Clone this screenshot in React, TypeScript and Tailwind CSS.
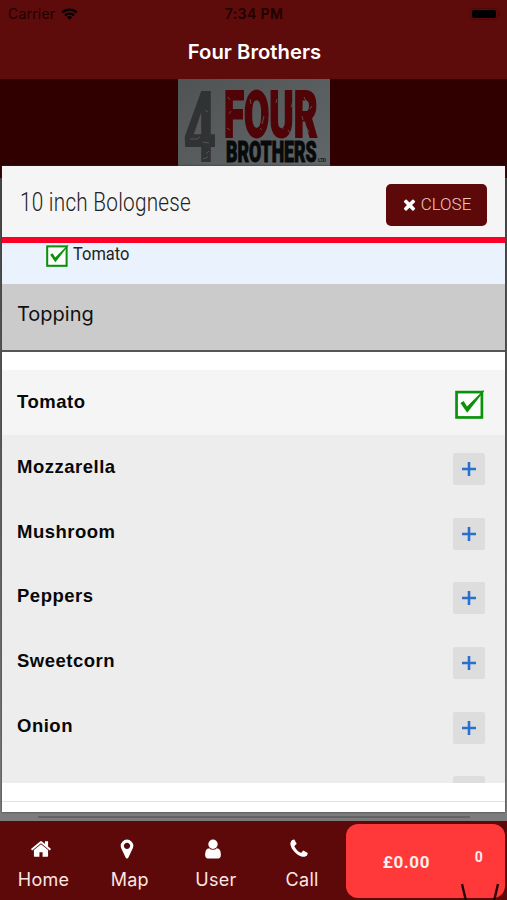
import React, { useState } from 'react';

interface Topping {
  id: string;
  name: string;
}

interface NavItem {
  label: string;
  path: string;
}

const toppings: Topping[] = [
  { id: 'tomato', name: 'Tomato' },
  { id: 'mozzarella', name: 'Mozzarella' },
  { id: 'mushroom', name: 'Mushroom' },
  { id: 'peppers', name: 'Peppers' },
  { id: 'sweetcorn', name: 'Sweetcorn' },
  { id: 'onion', name: 'Onion' },
];

const timesPath =
  'M1490 1322q0 40-28 68l-136 136q-28 28-68 28t-68-28l-294-294-294 294q-28 28-68 28t-68-28l-136-136q-28-28-28-68t28-68l294-294-294-294q-28-28-28-68t28-68l136-136q28-28 68-28t68 28l294 294 294-294q28-28 68-28t68 28l136 136q28 28 28 68t-28 68l-294 294 294 294q28 28 28 68z';

const navItems: NavItem[] = [
  {
    label: 'Home',
    path: 'M1472 992v480q0 26-19 45t-45 19h-384v-384h-256v384h-384q-26 0-45-19t-19-45v-480q0-1 .5-3t.5-3l575-474 575 474q1 2 1 6zm223-69l-62 74q-8 9-21 11h-3q-13 0-21-7l-692-577-692 577q-12 8-24 7-13-2-21-11l-62-74q-8-10-7-23.5t11-21.5l719-599q32-26 76-26t76 26l244 204v-195q0-14 9-23t23-9h192q14 0 23 9t9 23v408l219 182q10 8 11 21.5t-7 23.5z',
  },
  {
    label: 'Map',
    path: 'M1152 640q0-106-75-181t-181-75-181 75-75 181 75 181 181 75 181-75 75-181zm256 0q0 109-33 179l-364 774q-16 33-47.5 52t-67.5 19-67.5-19-46.5-52l-365-774q-33-70-33-179 0-212 150-362t362-150 362 150 150 362z',
  },
  {
    label: 'User',
    path: 'M1536 1399q0 109-62.5 187t-150.5 78h-854q-88 0-150.5-78t-62.5-187q0-85 8.5-160.5t31.5-152 58.5-131 94-89 134.5-34.5q131 128 313 128t313-128q76 0 134.5 34.5t94 89 58.5 131 31.5 152 8.5 160.5zm-256-887q0 159-112.5 271.5t-271.5 112.5-271.5-112.5-112.5-271.5 112.5-271.5 271.5-112.5 271.5 112.5 112.5 271.5z',
  },
  {
    label: 'Call',
    path: 'M1600 1240q0 27-10 70.5t-21 68.5q-21 50-122 106-94 51-186 51-27 0-53-3.5t-57.5-12.5-47-14.5-55.5-20.5-49-18q-98-35-175-83-127-79-264-216t-216-264q-48-77-83-175-3-9-18-49t-20.5-55.5-14.5-47-12.5-57.5-3.5-53q0-92 51-186 56-101 106-122 25-11 68.5-21t70.5-10q14 0 21 3 18 6 53 76 11 19 30 54t35 63.5 31 53.5q3 4 17.5 25t21.5 35.5 7 28.5q0 20-28.5 50t-62 55-62 53-28.5 46q0 9 5 22.5t8.5 20.5 14 24 11.5 19q76 137 174 235t235 174q2 1 19 11.5t24 14 20.5 8.5 22.5 5q18 0 46-28.5t53-62 55-62 50-28.5q14 0 28.5 7t35.5 21.5 25 17.5q25 15 53.5 31t63.5 35 54 30q70 35 76 53 3 7 3 21z',
  },
];

const Icon: React.FC<{ path: string; className: string }> = ({ path, className }) => (
  <svg viewBox="0 0 1792 1792" fill="currentColor" className={className}>
    <path d={path} />
  </svg>
);

const CheckIcon: React.FC<{ className: string }> = ({ className }) => (
  <svg viewBox="0 0 29 29" className={className}>
    <rect x="1.5" y="3" width="24.5" height="24.5" fill="#fff" stroke="#0a930a" strokeWidth="2.6" />
    <path d="M5.2 13.5l3.2-1.8 3.2 5.3L27.5 1.2l.8.8L11.8 23z" fill="#0a930a" />
  </svg>
);

const Logo: React.FC = () => (
  <svg viewBox="0 0 152 99" className="h-[99px] w-[152px]">
    <defs>
      <linearGradient id="paper" x1="0" y1="0" x2="1" y2="1">
        <stop offset="0" stopColor="#505353" />
        <stop offset="1" stopColor="#62686b" />
      </linearGradient>
    </defs>
    <rect width="152" height="99" fill="url(#paper)" />
    <g fontFamily="Roboto, 'Liberation Sans', sans-serif" fontWeight="900">
      <text transform="translate(5 83) scale(.58 1)" fontSize="100" fill="#303233">4</text>
      <text transform="translate(46 57.5) scale(.60 1)" fontSize="64" fill="#510407" stroke="#510407" strokeWidth="2" textLength="156" lengthAdjust="spacingAndGlyphs">FOUR</text>
      <text transform="translate(48 83) scale(.6 1)" fontSize="30" fill="#080a0b" stroke="#080a0b" strokeWidth="1" textLength="151" lengthAdjust="spacingAndGlyphs">BROTHERS</text>
      <text x="140" y="83" fontSize="5" fill="#1b1d1e" textLength="8">LTD</text>
    </g>
    <g stroke="#5b5f61" strokeWidth=".8" fill="none">
      <path d="M50 18l2 3M53 32l-2 3M49 49l3 2M72 20l1 5M86 37l-2 8M82 49l2 2M99 20l-1 4M103 45l2 5M115 23l-2 5M110 51l2 3M126 18l2 4M134 27l-2 3M124 37l1 4M128 48l3 5" />
      <path d="M12 60h7l3-2M25 63l6 1M28 75l3-3M25 80l5-2M27 31l3 2" />
    </g>
  </svg>
);

const StatusBar: React.FC = () => (
  <div className="flex h-[27px] items-center pr-[7px] pl-2 text-[#210000]">
    <div className="flex flex-1 items-center gap-[6px]">
      <span className="text-[14px] tracking-[0.2px]">Carrier</span>
      <svg viewBox="0 0 18 13" className="h-[12px] w-[17px] text-black">
        <g fill="none" stroke="currentColor" strokeWidth="2.4">
          <path d="M1.2 5a11.2 11.2 0 0 1 15.6 0" />
          <path d="M4.2 8a6.9 6.9 0 0 1 9.6 0" />
        </g>
        <path d="M6.2 10a4 4 0 0 1 5.6 0L9 12.8z" fill="currentColor" />
      </svg>
    </div>
    <span className="text-[14px] font-semibold tracking-[0.4px]">7:34 PM</span>
    <div className="flex flex-1 items-center justify-end">
      <div className="h-[12px] w-[28px] rounded-[3.5px] border border-[#500808] p-px">
        <div className="h-full w-full rounded-[2px] bg-black"></div>
      </div>
      <div className="ml-px h-1 w-[1.5px] rounded-r bg-[#420606]"></div>
    </div>
  </div>
);

const App: React.FC = () => {
  const [selected, setSelected] = useState<string[]>(['tomato']);

  const toggle = (id: string) => {
    setSelected(prev => (prev.includes(id) ? prev.filter(s => s !== id) : [...prev, id]));
  };

  return (
    <div className="flex h-[900px] w-[507px] flex-col overflow-hidden bg-[#7f7f7f]">
      <header className="h-[79px] shrink-0 bg-[#5e0b0b] font-['Inter',sans-serif]">
        <StatusBar />
        <h1 className="text-center text-[20.3px] leading-[50px] font-semibold text-white">
          <span className="relative left-px">Four Brothers</span>
        </h1>
      </header>

      <main className="relative flex h-[742px] shrink-0 flex-col justify-between bg-linear-to-b from-[#3f3f3f] to-[#7f7f7f]">
        <div className="flex h-[99px] justify-center bg-[#300000]">
          <Logo />
        </div>
        <div className="flex h-[9px] items-center justify-center bg-[#7c7c7c]">
          <div className="h-[2px] w-[432px] bg-[#636363]"></div>
        </div>

        <section className="absolute top-[87px] left-[2px] flex h-[646px] w-[503px] flex-col bg-white shadow-[0_0_2px_#333]">
          <div className="flex h-[77px] shrink-0 items-center justify-between border-b-[6px] border-[#fb0026] bg-[#f5f5f5] pr-[18px] pl-[18px]">
            <h2 className="origin-left scale-x-[0.83] pt-[2px] font-['Roboto',sans-serif] text-[25px] font-light tracking-[0.3px] whitespace-nowrap text-[#222]">
              10 inch Bolognese
            </h2>
            <button className="mt-[6px] flex h-[42px] w-[101px] items-center justify-center gap-[3px] rounded-[5px] bg-[#5e0909] pr-px font-['Roboto',sans-serif] text-[17px] font-light text-[#ecc9c5]">
              <Icon path={timesPath} className="h-[17px] w-[17px] text-white" />
              CLOSE
            </button>
          </div>

          <div className="flex h-[41px] shrink-0 gap-[4px] bg-[#eaf2fe] pl-[44px]">
            <CheckIcon className="mt-[1px] h-[23px] w-[23px]" />
            <span className="origin-left scale-x-[0.94] font-['Roboto',sans-serif] text-[17.5px] leading-[22px] text-[#222]">Tomato</span>
          </div>

          <h3 className="h-[68px] shrink-0 border-b-2 border-[#555] bg-[#cbcbcb] pl-[15px] font-['Inter',sans-serif] text-[20px] leading-[61px] text-[#111]">
            Topping
          </h3>

          <div className="mt-[18px] h-[413px] shrink-0 overflow-hidden bg-[#ededed] font-['Liberation_Sans',sans-serif]">
            {toppings.map(topping => (
              <div
                key={topping.id}
                className="flex h-[64.7px] items-center justify-between pr-[20px] pl-[15px] first:bg-[#f5f5f5]"
              >
                <span className="text-[18.5px] leading-[22px] font-bold tracking-[0.5px] text-[#080808]">{topping.name}</span>
                <button onClick={() => toggle(topping.id)} className="mt-[4px] flex h-8 w-8 items-center justify-center">
                  {selected.includes(topping.id) ? (
                    <CheckIcon className="ml-px h-[30px] w-[30px]" />
                  ) : (
                    <span className="flex h-8 w-8 items-center justify-center rounded-[2px] bg-[#dddddd]">
                      <svg viewBox="0 0 16 16" className="h-4 w-4">
                        <path d="M8 1v14M1 8h14" stroke="#2870cf" strokeWidth="2.6" />
                      </svg>
                    </span>
                  )}
                </button>
              </div>
            ))}
            <div className="mt-[18px] mr-[20px] ml-auto h-8 w-8 rounded-[2px] bg-[#dddddd]"></div>
          </div>
          <div className="mt-[18px] border-t border-[#e2e2e2]"></div>
        </section>
      </main>

      <nav className="flex h-[79px] shrink-0 bg-[#5e0909] font-['Inter',sans-serif]">
        {navItems.map(item => (
          <button key={item.label} className="flex w-[86.2px] flex-col items-center pt-[17px] pl-px text-white">
            <Icon path={item.path} className="-ml-[6px] h-[22px] w-[22px]" />
            <span className="mt-[7px] text-[18px] leading-[26px] tracking-[0.3px] text-[#fbe6e3]">{item.label}</span>
          </button>
        ))}
        <button className="relative mt-[3px] ml-[1px] flex h-[74px] w-[159px] items-center rounded-[12px] bg-[#ff3939] pl-[37px] font-['Roboto',sans-serif] font-bold text-[#ffecec]">
          <span className="mt-[3px] text-[17px] tracking-[0.6px]">£0.00</span>
          <span className="mb-[7px] ml-auto pr-[22px] font-['Roboto',sans-serif] text-[14px]">0</span>
          <svg viewBox="0 0 40 17" className="absolute top-[59px] right-[5px] h-[17px] w-10">
            <path d="M2 1l4 17M38 1l-4 17" stroke="#260406" strokeWidth="2.4" fill="none" />
          </svg>
        </button>
      </nav>
    </div>
  );
};

export default App;
